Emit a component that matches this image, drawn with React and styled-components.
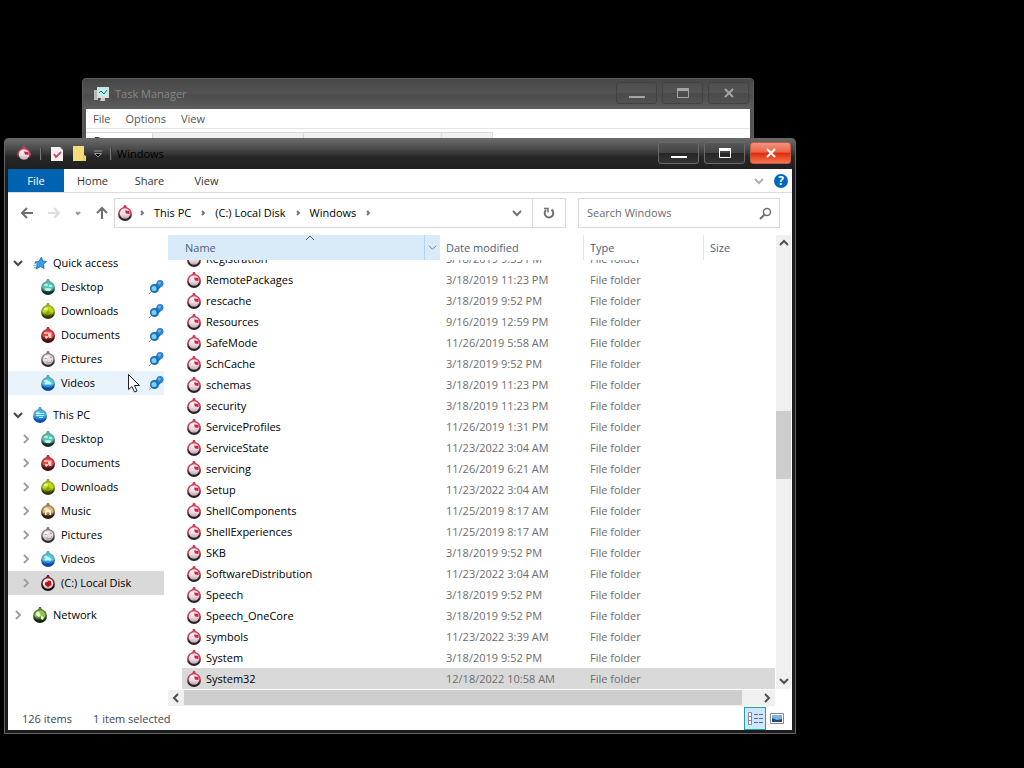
import React, { useEffect, useRef } from "react";
import styled, { createGlobalStyle } from "styled-components";

const GlobalStyles = createGlobalStyle`
  * {
    box-sizing: border-box;
  }
  body {
    margin: 0;
    background: #000;
    font-family: "Open Sans", "Noto Sans", sans-serif;
    font-size: 11px;
    line-height: 16px;
    color: #111;
    overflow: hidden;
  }
  button, input {
    font: inherit;
    color: inherit;
    margin: 0;
    padding: 0;
    border: 0;
    background: none;
  }
  svg {
    display: block;
    flex: none;
  }
`;

const Desktop = styled.main`
  position: relative;
  min-height: 100vh;
`;
const Window = styled.section`
  position: absolute;
  display: flex;
  flex-direction: column;
  padding: 0 3px 3px;
  border: 1px solid ${(p) => (p.$inactive ? "#5c5c5c" : "#666")};
  border-radius: 4px 4px 0 0;
  background: ${(p) => (p.$inactive ? "#555" : "#1c1c1c")};
`;
const TaskWindow = styled(Window)`
  left: 82px;
  right: 270px;
  top: 78px;
  height: 400px;
`;
const ExplorerWindow = styled(Window)`
  left: 4px;
  right: 228px;
  top: 138px;
  bottom: 34px;
`;
const TitleBar = styled.header`
  display: flex;
  align-items: center;
  height: 30px;
  flex: none;
  margin: 0 -3px;
  padding: 0 4px 0 11px;
  border-radius: 3px 3px 0 0;
  background: ${(p) =>
    p.$inactive
      ? "linear-gradient(#484848, #525252 45%, #4c4c4c 55%, #5e5e5e)"
      : "linear-gradient(#6a6a6a, #484848 35%, #262626 60%, #202020)"};
`;
const Title = styled.h1`
  margin: 0;
  flex: 1;
  font-size: 11px;
  font-weight: 400;
  color: ${(p) => (p.$inactive ? "#888" : "#000")};
`;
const Captions = styled.div`
  display: flex;
  gap: 5px;
  padding-bottom: 2px;
`;
const Caption = styled.button`
  width: 41px;
  height: 22px;
  display: grid;
  place-items: center;
  border: 1px solid ${(p) => (p.$inactive ? "#424242" : "#6a6a6a")};
  border-radius: 3px;
  color: ${(p) => (p.$inactive ? "#a4a4a4" : "#fff")};
  background: ${(p) =>
    p.$close
      ? "linear-gradient(#f09480, #ee6446 45%, #e02c0c 52%, #f47850)"
      : p.$inactive
        ? "linear-gradient(#4e4e4e, #545454 48%, #4a4a4a 52%, #525252)"
        : "linear-gradient(#565656, #444 48%, #262626 52%, #343434)"};
  border-color: ${(p) => p.$close && "#c05a44"};
`;
const Client = styled.div`
  flex: 1;
  min-height: 0;
  display: flex;
  flex-direction: column;
  background: #fff;
`;
const MenuBar = styled.nav`
  display: flex;
  gap: 15px;
  padding: 2px 7px;
  height: 20px;
  border-bottom: 1px solid #e4e4e4;
  color: #555;
`;
const TaskTabs = styled.div`
  display: flex;
  height: 18px;
  margin-top: 3px;
`;
const TaskTab = styled.button`
  width: ${(p) => p.$width}px;
  padding: 0 8px;
  text-align: left;
  border: 1px solid #d9d9d9;
  border-left: 0;
  background: ${(p) => (p.$active ? "#fff" : "#f0f0f0")};
`;
const QuickBar = styled.div`
  display: flex;
  align-items: center;
  gap: 8px;
  margin-right: 5px;
`;
const BarLine = styled.span`
  width: 2px;
  height: 12px;
  border-left: 1px solid #777;
  border-right: 1px solid #333;
`;
const RibbonTabs = styled.nav`
  display: flex;
  align-items: center;
  height: 24px;
  flex: none;
  border-bottom: 1px solid #dcdcdc;
`;
const RibbonTab = styled.button`
  height: 23px;
  width: ${(p) => (p.$file ? 56 : 57)}px;
  color: ${(p) => (p.$file ? "#fff" : "#333")};
  background: ${(p) => (p.$file ? "#0063b1" : "transparent")};
`;
const RibbonEnd = styled.div`
  margin-left: auto;
  padding-right: 4px;
  display: flex;
  align-items: center;
  gap: 10px;
`;
const Help = styled.button`
  width: 14px;
  height: 14px;
  border-radius: 50%;
  background: #0067c0;
  color: #fff;
  font-size: 12px;
  font-weight: 700;
  line-height: 14px;
`;
const AddressRow = styled.div`
  display: flex;
  align-items: center;
  flex: none;
  height: 42px;
  padding: 0 12px 2px 12px;
`;
const NavButtons = styled.div`
  display: flex;
  align-items: center;
  width: 94px;
  gap: 13px;
`;
const IconButton = styled.button`
  display: grid;
  place-items: center;
  color: ${(p) => p.$tone || "#707070"};
`;
const AddressBox = styled.div`
  flex: 1;
  height: 30px;
  display: flex;
  align-items: center;
  border: 1px solid #d9d9d9;
`;
const Crumbs = styled.div`
  flex: 1;
  display: flex;
  align-items: center;
  gap: 8px;
  padding-left: 2px;
  color: #777;
`;
const CrumbIcon = styled.span`
  width: 13px;
`;
const Crumb = styled.button`
  color: #000;
  white-space: nowrap;
`;
const Refresh = styled(IconButton)`
  width: 33px;
  height: 28px;
  margin-left: 10px;
  border-left: 1px solid #d9d9d9;
`;
const SearchBox = styled.label`
  width: 202px;
  height: 30px;
  margin-left: 12px;
  padding: 0 7px 0 8px;
  display: flex;
  align-items: center;
  border: 1px solid #d9d9d9;
  color: #707070;
`;
const SearchInput = styled.input`
  flex: 1;
  min-width: 0;
  outline: 0;
  &::placeholder {
    color: #6d6d6d;
    opacity: 1;
  }
`;
const Body = styled.div`
  flex: 1;
  min-height: 0;
  display: grid;
  grid-template-columns: 160px minmax(0, 1fr);
`;
const Sidebar = styled.nav`
  padding: 16px 4px 0 0;
`;
const Group = styled.div`
  margin-bottom: 8px;
`;
const NavItem = styled.button`
  width: 100%;
  height: 24px;
  display: flex;
  align-items: center;
  padding-left: ${(p) => (p.$child ? 13 : 5)}px;
  color: #000;
  text-align: left;
  background: ${(p) =>
    p.$selected ? "#d9d9d9" : p.$hover ? "#e8f3fc" : "transparent"};
`;
const Twisty = styled.span`
  width: 10px;
  height: 10px;
  color: ${(p) => (p.$open ? "#444" : "#a0a0a0")};
`;
const NavIcon = styled.span`
  width: 16px;
  margin: 0 5px 0 9px;
`;
const NavLabel = styled.span`
  flex: 1;
  white-space: nowrap;
`;
const Content = styled.div`
  min-width: 0;
  min-height: 0;
  display: grid;
  grid-template-columns: minmax(0, 1fr) 16px;
  grid-template-rows: minmax(0, 1fr) 17px;
  padding-right: 1px;
`;
const TableScroll = styled.div`
  overflow: auto;
  scrollbar-width: none;
`;
const Table = styled.table`
  width: 100%;
  table-layout: fixed;
  border-collapse: separate;
  border-spacing: 0;
`;
const HeadCell = styled.th`
  position: sticky;
  top: 0;
  z-index: 1;
  height: 25px;
  padding: 0 0 0 6px;
  font-weight: 400;
  text-align: left;
  color: #4c607a;
  background: ${(p) => (p.$sorted ? "#d9ebf9" : "#fff")};
  border-right: ${(p) => (p.$line ? "1px solid #e5e5e5" : "0")};
  width: ${(p) => (p.$width ? `${p.$width}px` : "auto")};
`;
const SortedHead = styled.div`
  display: flex;
  align-items: center;
  justify-content: space-between;
  height: 25px;
  padding-left: 11px;
`;
const SortMark = styled.span`
  position: absolute;
  top: -2px;
  left: 137px;
`;
const FilterButton = styled(IconButton)`
  width: 16px;
  height: 25px;
  border-left: 1px solid #b5d5ec;
`;
const Cell = styled.td`
  height: 21px;
  padding: 0 0 0 6px;
  white-space: nowrap;
  color: #6d6d6d;
  background: ${(p) => (p.$selected ? "#d9d9d9" : "#fff")};
`;
const NameCell = styled.td`
  height: 21px;
  padding: 0 0 0 14px;
`;
const NameInner = styled.div`
  display: flex;
  align-items: center;
  gap: 4px;
  height: 21px;
  padding-left: 4px;
  color: #000;
  background: ${(p) => (p.$selected ? "#d9d9d9" : "#fff")};
`;
const VScroll = styled.div`
  display: flex;
  flex-direction: column;
  align-items: center;
  justify-content: space-between;
  margin-left: 1px;
  background: #f0f0f0;
  color: #505050;
`;
const HScroll = styled(VScroll)`
  flex-direction: row;
  margin: 1px 0 0;
`;
const ScrollArrow = styled(IconButton)`
  width: 16px;
  height: 16px;
  color: #505050;
`;
const VTrack = styled.div`
  flex: 1;
  width: 100%;
  display: grid;
  grid-template-rows: 160fr 68fr 194fr;
`;
const HTrack = styled.div`
  flex: 1;
  height: 100%;
  display: grid;
  grid-template-columns: 557fr 17fr;
`;
const Thumb = styled.div`
  grid-row: ${(p) => (p.$vertical ? 2 : 1)};
  background: #cdcdcd;
  margin-bottom: ${(p) => (p.$vertical ? 0 : 1)}px;
`;
const StatusBar = styled.footer`
  height: 24px;
  flex: none;
  display: flex;
  align-items: center;
  gap: 21px;
  padding: 1px 4px 0 14px;
  color: #3c4654;
`;
const Views = styled.div`
  display: flex;
  align-items: center;
  margin-left: auto;
`;
const ViewButton = styled(IconButton)`
  width: 22px;
  height: 23px;
  border: 1px solid ${(p) => (p.$active ? "#26a0a8" : "transparent")};
  background: ${(p) => (p.$active ? "#cce8ff" : "transparent")};
`;
const Cursor = styled.span`
  position: absolute;
  left: 128px;
  top: 374px;
`;

const rotations = { right: 0, down: 90, left: 180, up: 270 };
const Chevron = ({ dir = "right", size = 10, weight = 2 }) => (
  <svg width={size} height={size} viewBox="0 0 10 10">
    <path
      d="M3 1 L7 5 L3 9"
      fill="none"
      stroke="currentColor"
      strokeWidth={weight}
      transform={`rotate(${rotations[dir]} 5 5)`}
    />
  </svg>
);
const Caret = ({ dir = "right" }) => (
  <svg width="8" height="8" viewBox="0 0 8 8">
    <path
      d="M3 2 L5 4 L3 6"
      fill="none"
      stroke="currentColor"
      strokeWidth="2"
      transform={`rotate(${rotations[dir]} 4 4)`}
    />
  </svg>
);

const Arrow = ({ dir }) => (
  <svg width="14" height="14" viewBox="0 0 14 14">
    <path
      d="M2 7 H13 M7 2 L2 7 L7 12"
      fill="none"
      stroke="currentColor"
      strokeWidth="2"
      transform={`rotate(${dir} 7 7)`}
    />
  </svg>
);

// rim, shade, body and mark colours of the round ornaments
const tones = {
  folder: ["#c8405a", "#2a2026", "#f0dfe3", "#d81c48"],
  desktop: ["#6c9c94", "#103024", "#4cd0bc", "#c8f0e8"],
  downloads: ["#98a428", "#2c3806", "#c4dc10", "#8aa800"],
  documents: ["#b43434", "#401010", "#e84444", "#ffc8c8"],
  pictures: ["#8c7c80", "#302c2c", "#e8e2e2", "#a89ca0"],
  videos: ["#6ca0b4", "#1040a8", "#40d0e8", "#c8f8ff"],
  pc: ["#5c9cc0", "#1050b0", "#38b8ec", "#b8ecff"],
  music: ["#9c7c4c", "#281c10", "#e8b878", "#fff4dc"],
  disk: ["#782830", "#180c0c", "#f4e8e4", "#b81020"],
  network: ["#5c7840", "#10240c", "#8cc850", "#f0ffe0"],
};
const marks = {
  folder: <path d="M8 5.500 L12.500 6 L12.500 9 L9 8.500 Z" />,
  desktop: <path d="M4 10 Q8 8 12 10 L10 12 H6 Z M9 6 H12 V8 H9 Z" />,
  downloads: <path d="M4 11 L7.500 8 L8 6 L9 8 L12 11 L9 10.500 H7 Z" />,
  documents: <path d="M4.500 9 H8 V5.500 H11.500 V11 H9 V9.500 L6 12 Z" />,
  pictures: <path d="M5 7 H7 V8 H5 Z M6 10 L8 11 H11 V9 H12 L11 12 H7 Z M10 6 H12 V7 H10 Z" />,
  videos: <path d="M4.500 8 Q8 4 11.500 8 L11 9.500 H5 Z" />,
  pc: <path d="M4.500 6 H12 V7 H4.500 Z M4 8 H12 V9 H4 Z M7 10 H11 V11 H7 Z" />,
  music: <path d="M5 12 V8 Q8 4 11 8 V12 H9.500 V9 H6.500 V12 Z" />,
  disk: <path d="M7 5.500 L11 6 L11.500 10 L8 12 L5 10 L5 8 Z" />,
  network: <path d="M5 5 L9 8 L7 10 L4 8 Z M9 9 L12 10 L11 13 L9 12 Z" />,
};
const Ball = ({ kind = "folder" }) => {
  const [rim, shade, fill, mark] = tones[kind];
  const light = kind === "folder" || kind === "disk" || kind === "pictures";
  return (
    <svg width="16" height="16" viewBox="0 0 16 16" aria-hidden="true">
      <defs>
        <linearGradient id={`rim-${kind}`} x1="0" y1="0" x2="0" y2="1">
          <stop offset="0.45" stopColor={rim} />
          <stop offset="0.75" stopColor={shade} />
        </linearGradient>
        <linearGradient id={`fill-${kind}`} x1="0" y1="0" x2="0" y2="1">
          <stop offset="0.55" stopColor={fill} />
          <stop offset="1" stopColor={light ? "#b8a8ac" : shade} />
        </linearGradient>
      </defs>
      <path d="M7 0 H9 L10 3 H6 Z" fill={rim} />
      <circle cx="8" cy="9" r="7" fill={`url(#rim-${kind})`} />
      <circle cx="8" cy="8.500" r="5.200" fill={`url(#fill-${kind})`} />
      <g fill={mark}>{marks[kind]}</g>
      <ellipse cx="6" cy="6" rx="2" ry="1.200" fill="#fff" opacity="0.6" />
    </svg>
  );
};

const Star = () => (
  <svg width="16" height="16" viewBox="0 0 16 16">
    <path
      d="M9.500 2 L10.500 6 L14.500 6.500 L11.500 9 L12 13.500 L8.500 11.500 L4 14 L5.500 10 L3 7 L7 6.500 Z"
      fill="#3c9ce8"
      stroke="#2478c0"
    />
    <path d="M2 8.500 H5 M1 10.500 H5 M2 12.500 H4" stroke="#7cc0f0" />
  </svg>
);

const Pin = () => (
  <svg width="16" height="16" viewBox="0 0 16 16">
    <path d="M1 15 L5 11" stroke="#999" />
    <path d="M6 6 L11 3 L14 7 L9 12 Z" fill="#1c6cb4" />
    <circle cx="6.500" cy="9.500" r="4.500" fill="#1c70b8" />
    <circle cx="6" cy="9.500" r="2.500" fill="#7cd0f0" />
    <circle cx="12" cy="4.500" r="3.500" fill="#2c80cc" />
    <circle cx="11.500" cy="4" r="1.500" fill="#70b4ea" />
  </svg>
);

const WindowButtons = ({ inactive }) => (
  <Captions>
    <Caption $inactive={inactive} aria-label="Minimize">
      <svg width="16" height="14" viewBox="0 0 16 14">
        <path d="M0 11 H16" stroke="currentColor" strokeWidth="2" />
      </svg>
    </Caption>
    <Caption $inactive={inactive} aria-label="Maximize">
      <svg width="12" height="10" viewBox="0 0 12 10">
        <path d="M0.500 0 V9.500 H11.500 V0" fill="none" stroke="currentColor" />
        <path d="M0 1.500 H12" stroke="currentColor" strokeWidth="3" />
      </svg>
    </Caption>
    <Caption $inactive={inactive} $close={!inactive} aria-label="Close">
      <svg width="10" height="10" viewBox="0 0 10 10">
        <path d="M1 1 L9 9 M9 1 L1 9" stroke="currentColor" strokeWidth="2" />
      </svg>
    </Caption>
  </Captions>
);

const quickAccess = [
  ["Desktop", "desktop"],
  ["Downloads", "downloads"],
  ["Documents", "documents"],
  ["Pictures", "pictures"],
  ["Videos", "videos"],
];
const thisPc = [
  ["Desktop", "desktop"],
  ["Documents", "documents"],
  ["Downloads", "downloads"],
  ["Music", "music"],
  ["Pictures", "pictures"],
  ["Videos", "videos"],
  ["(C:) Local Disk", "disk"],
];
const folders = [
  ["Registration", "3/18/2019 9:53 PM"],
  ["RemotePackages", "3/18/2019 11:23 PM"],
  ["rescache", "3/18/2019 9:52 PM"],
  ["Resources", "9/16/2019 12:59 PM"],
  ["SafeMode", "11/26/2019 5:58 AM"],
  ["SchCache", "3/18/2019 9:52 PM"],
  ["schemas", "3/18/2019 11:23 PM"],
  ["security", "3/18/2019 11:23 PM"],
  ["ServiceProfiles", "11/26/2019 1:31 PM"],
  ["ServiceState", "11/23/2022 3:04 AM"],
  ["servicing", "11/26/2019 6:21 AM"],
  ["Setup", "11/23/2022 3:04 AM"],
  ["ShellComponents", "11/25/2019 8:17 AM"],
  ["ShellExperiences", "11/25/2019 8:17 AM"],
  ["SKB", "3/18/2019 9:52 PM"],
  ["SoftwareDistribution", "11/23/2022 3:04 AM"],
  ["Speech", "3/18/2019 9:52 PM"],
  ["Speech_OneCore", "3/18/2019 9:52 PM"],
  ["symbols", "11/23/2022 3:39 AM"],
  ["System", "3/18/2019 9:52 PM"],
  ["System32", "12/18/2022 10:58 AM"],
];

const TaskManager = () => (
  <TaskWindow $inactive>
    <TitleBar $inactive>
      <QuickBar>
        <svg width="16" height="16" viewBox="0 0 16 16">
          <path d="M0 4 H4 V14 H0 Z" fill="#b8b8b8" />
          <path d="M3 1 H15 V12 H3 Z" fill="#d8dcdc" />
          <path d="M4.500 2.500 H13.500 V10 H4.500 Z" fill="#bff0f0" />
          <path d="M5 7 L7 5 L10 8 L13 4" fill="none" stroke="#26707c" />
          <path d="M7 12 H11 V15 H6 Z" fill="#ccc" />
        </svg>
      </QuickBar>
      <Title $inactive>Task Manager</Title>
      <WindowButtons inactive />
    </TitleBar>
    <Client>
      <MenuBar>
        <button>File</button>
        <button>Options</button>
        <button>View</button>
      </MenuBar>
      <TaskTabs>
        <TaskTab $active $width={67}>Processes</TaskTab>
        <TaskTab $width={151} />
        <TaskTab $width={138} />
        <TaskTab $width={51} />
      </TaskTabs>
    </Client>
  </TaskWindow>
);

const SidePane = () => (
  <Sidebar>
    <Group>
      <NavItem>
        <Twisty $open><Chevron dir="down" /></Twisty>
        <NavIcon><Star /></NavIcon>
        <NavLabel>Quick access</NavLabel>
      </NavItem>
      {quickAccess.map(([name, kind]) => (
        <NavItem key={name} $child $hover={name === "Videos"}>
          <Twisty />
          <NavIcon><Ball kind={kind} /></NavIcon>
          <NavLabel>{name}</NavLabel>
          <Pin />
        </NavItem>
      ))}
    </Group>
    <Group>
      <NavItem>
        <Twisty $open><Chevron dir="down" /></Twisty>
        <NavIcon><Ball kind="pc" /></NavIcon>
        <NavLabel>This PC</NavLabel>
      </NavItem>
      {thisPc.map(([name, kind]) => (
        <NavItem key={name} $child $selected={kind === "disk"}>
          <Twisty><Chevron /></Twisty>
          <NavIcon><Ball kind={kind} /></NavIcon>
          <NavLabel>{name}</NavLabel>
        </NavItem>
      ))}
    </Group>
    <NavItem>
      <Twisty><Chevron /></Twisty>
      <NavIcon><Ball kind="network" /></NavIcon>
      <NavLabel>Network</NavLabel>
    </NavItem>
  </Sidebar>
);

const FileTable = () => {
  const scroller = useRef(null);

  useEffect(() => {
    scroller.current.scrollTop = scroller.current.scrollHeight;
  }, []);

  return (
    <TableScroll ref={scroller}>
      <Table>
        <thead>
          <tr>
            <HeadCell $sorted $width={272}>
              <SortedHead>
                Name
                <SortMark><Chevron dir="up" weight={1} /></SortMark>
                <FilterButton aria-label="Filter by name">
                  <Chevron dir="down" size={9} weight={1} />
                </FilterButton>
              </SortedHead>
            </HeadCell>
            <HeadCell $line $width={144}>Date modified</HeadCell>
            <HeadCell $line $width={120}>Type</HeadCell>
            <HeadCell>Size</HeadCell>
          </tr>
        </thead>
        <tbody>
          {folders.map(([name, date]) => {
            const selected = name === "System32";
            return (
              <tr key={name}>
                <NameCell>
                  <NameInner $selected={selected}>
                    <Ball />
                    {name}
                  </NameInner>
                </NameCell>
                <Cell $selected={selected}>{date}</Cell>
                <Cell $selected={selected}>File folder</Cell>
                <Cell $selected={selected} />
              </tr>
            );
          })}
        </tbody>
      </Table>
    </TableScroll>
  );
};

const Explorer = () => (
  <ExplorerWindow>
    <TitleBar>
      <QuickBar>
        <Ball />
        <BarLine />
        <svg width="14" height="16" viewBox="0 0 14 16">
          <path d="M1 1 H10 L13 4 V15 H1 Z" fill="#f4f0f0" />
          <path d="M4 8 L6 11 L11 6" fill="none" stroke="#d05060" strokeWidth="2" />
        </svg>
        <svg width="14" height="16" viewBox="0 0 14 16">
          <path d="M1 0 H12 V9 L14 10 V15 H1 Z" fill="#f6dc78" />
          <path d="M12 9 V15" stroke="#d8b848" />
        </svg>
        <svg width="8" height="8" viewBox="0 0 8 8">
          <path d="M0 1 H8" stroke="#999" />
          <path d="M0.500 3.500 H7.500 L4 7 Z" fill="#000" stroke="#999" />
        </svg>
        <BarLine />
      </QuickBar>
      <Title>Windows</Title>
      <WindowButtons />
    </TitleBar>
    <Client>
      <RibbonTabs>
        <RibbonTab $file>File</RibbonTab>
        <RibbonTab>Home</RibbonTab>
        <RibbonTab>Share</RibbonTab>
        <RibbonTab>View</RibbonTab>
        <RibbonEnd>
          <IconButton $tone="#b0b0b0" aria-label="Expand the ribbon">
            <Chevron dir="down" />
          </IconButton>
          <Help>?</Help>
        </RibbonEnd>
      </RibbonTabs>
      <AddressRow>
        <NavButtons>
          <IconButton aria-label="Back"><Arrow dir={0} /></IconButton>
          <IconButton $tone="#dcdcdc" aria-label="Forward"><Arrow dir={180} /></IconButton>
          <IconButton $tone="#999" aria-label="Recent locations">
            <Caret dir="down" />
          </IconButton>
          <IconButton aria-label="Up"><Arrow dir={90} /></IconButton>
        </NavButtons>
        <AddressBox>
          <Crumbs>
            <CrumbIcon><Ball /></CrumbIcon>
            <Caret />
            <Crumb>This PC</Crumb>
            <Caret />
            <Crumb>(C:) Local Disk</Crumb>
            <Caret />
            <Crumb>Windows</Crumb>
            <Caret />
          </Crumbs>
          <IconButton aria-label="Previous locations"><Chevron dir="down" /></IconButton>
          <Refresh aria-label="Refresh">
            <svg width="12" height="12" viewBox="0 0 12 12">
              <path d="M3 3 A4.300 4.300 0 1 0 8.500 2.600" fill="none" stroke="currentColor" strokeWidth="2" />
              <path d="M1 1.500 H5 V5.500" fill="none" stroke="currentColor" strokeWidth="1.500" />
            </svg>
          </Refresh>
        </AddressBox>
        <SearchBox>
          <SearchInput type="text" placeholder="Search Windows" aria-label="Search Windows" />
          <svg width="13" height="13" viewBox="0 0 13 13">
            <circle cx="8" cy="5" r="3.500" fill="none" stroke="currentColor" strokeWidth="1.500" />
            <path d="M5.500 7.500 L1 12" stroke="currentColor" strokeWidth="2" />
          </svg>
        </SearchBox>
      </AddressRow>
      <Body>
        <SidePane />
        <Content>
          <FileTable />
          <VScroll>
            <ScrollArrow aria-label="Scroll up"><Chevron dir="up" /></ScrollArrow>
            <VTrack><Thumb $vertical /></VTrack>
            <ScrollArrow aria-label="Scroll down"><Chevron dir="down" /></ScrollArrow>
          </VScroll>
          <HScroll>
            <ScrollArrow aria-label="Scroll left"><Chevron dir="left" /></ScrollArrow>
            <HTrack><Thumb /></HTrack>
            <ScrollArrow aria-label="Scroll right"><Chevron /></ScrollArrow>
          </HScroll>
        </Content>
      </Body>
      <StatusBar>
        <span>126 items</span>
        <span>1 item selected</span>
        <Views>
          <ViewButton $active aria-label="Details view">
            <svg width="17" height="13" viewBox="0 0 17 13">
              <path d="M1.500 0.500 H4.500 V12.500 H1.500 Z M1.500 4.500 H4.500 M1.500 8.500 H4.500" fill="#fff" stroke="#889" />
              <path d="M7 2.500 H11 M12 2.500 H16 M7 6.500 H11 M12 6.500 H16 M7 10.500 H11 M12 10.500 H16" stroke="#668" />
            </svg>
          </ViewButton>
          <ViewButton aria-label="Large icons view">
            <svg width="14" height="11" viewBox="0 0 14 11">
              <path d="M0.500 0.500 H13.500 V10.500 H0.500 Z" fill="#fff" stroke="#888" />
              <path d="M2 2 H12 V9 H2 Z" fill="#79b4ea" />
              <path d="M2 5 L7 7 L12 6 V9 H2 Z" fill="#28476c" />
            </svg>
          </ViewButton>
        </Views>
      </StatusBar>
    </Client>
  </ExplorerWindow>
);

const App = () => (
  <>
    <GlobalStyles />
    <Desktop>
      <TaskManager />
      <Explorer />
      <Cursor>
        <svg width="12" height="19" viewBox="0 0 12 19">
          <path
            d="M0.500 0.500 V15.500 L4 12.500 L6.500 18 L9 17 L6.500 11.500 H11.500 Z"
            fill="#fff"
            stroke="#222"
          />
        </svg>
      </Cursor>
    </Desktop>
  </>
);

export default App;
